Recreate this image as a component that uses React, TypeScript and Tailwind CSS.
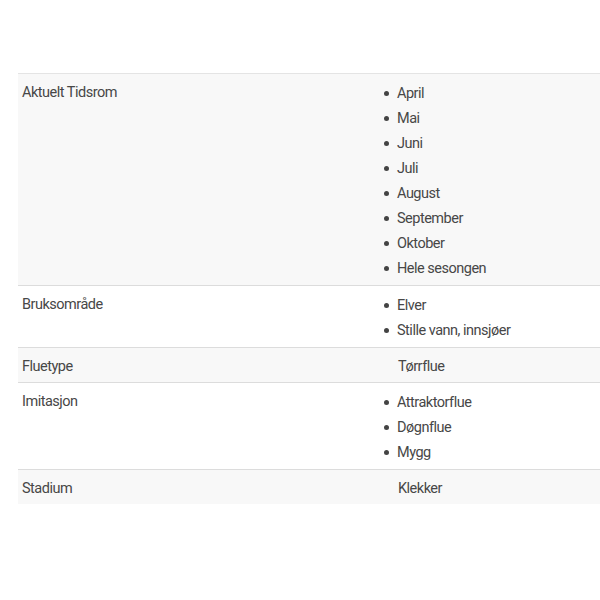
const rows: { label: string; values: string[]; list: boolean; shaded: boolean }[] = [
  {
    label: "Aktuelt Tidsrom",
    values: ["April", "Mai", "Juni", "Juli", "August", "September", "Oktober", "Hele sesongen"],
    list: true,
    shaded: true,
  },
  { label: "Bruksområde", values: ["Elver", "Stille vann, innsjøer"], list: true, shaded: false },
  { label: "Fluetype", values: ["Tørrflue"], list: false, shaded: true },
  { label: "Imitasjon", values: ["Attraktorflue", "Døgnflue", "Mygg"], list: true, shaded: false },
  { label: "Stadium", values: ["Klekker"], list: false, shaded: true },
];

export default function App() {
  return (
    <div className="min-h-[600px] w-[600px] overflow-hidden bg-white pt-[73px] pl-[18px] font-['Roboto',sans-serif] text-[14.5px] tracking-[-0.5px] text-[#474747]">
      <div className="w-[600px] border-t border-[#e4e4e4]">
        {rows.map((row, i) => (
          <div
            key={i}
            className={`grid grid-cols-[360px_1fr] ${i > 0 ? "border-t border-[#dcdcdc]" : ""} ${
              row.shaded ? "bg-[#f8f8f8]" : "bg-white"
            }`}
          >
            <div className="pt-[7px] pb-[4px] pl-1 leading-[23px]">{row.label}</div>
            <div className="pt-[7px] pb-[4px]">
              {row.list ? (
                <ul>
                  {row.values.map((v) => (
                    <li key={v} className="flex items-center leading-[25px]">
                      <span className="ml-[6px] mr-[8px] h-[5px] w-[5px] rounded-full bg-[#444]"></span>
                      {v}
                    </li>
                  ))}
                </ul>
              ) : (
                <div className="pl-[20px] leading-[23px]">{row.values[0]}</div>
              )}
            </div>
          </div>
        ))}
      </div>
    </div>
  );
}
